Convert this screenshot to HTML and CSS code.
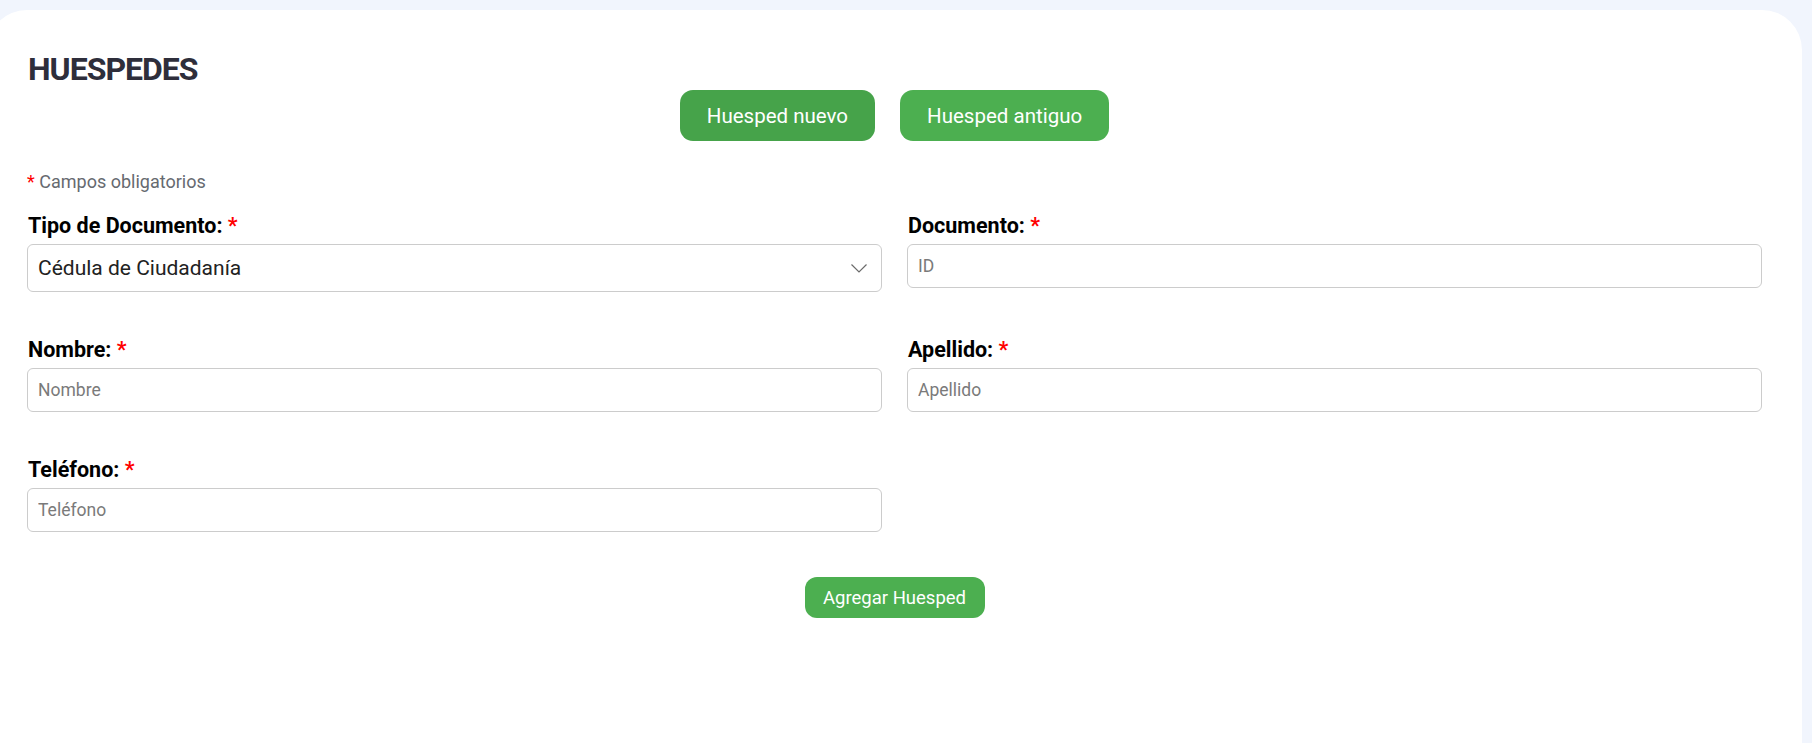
FILE: index.html
```html
<!DOCTYPE html>
<html lang="es">
<head>
<meta charset="utf-8">
<title>Huespedes</title>
<link rel="stylesheet" href="styles.css">
</head>
<body>
<main class="card">
  <h1 class="title">HUESPEDES</h1>
  <div class="mode-buttons">
    <button class="btn btn-mode btn-active" type="button">Huesped nuevo</button>
    <button class="btn btn-mode" type="button">Huesped antiguo</button>
  </div>
  <p class="required-note"><span class="req">*</span> Campos obligatorios</p>
  <form class="form-grid">
    <div class="field">
      <label class="label">Tipo de Documento: <span class="req">*</span></label>
      <div class="select">
        <span class="select-value">Cédula de Ciudadanía</span>
        <svg class="chevron" width="16" height="9" viewBox="0 0 16 9"><path d="M0.5 0.5 L8 8 L15.5 0.5" fill="none" stroke="#6b6b6b" stroke-width="1.2"/></svg>
      </div>
    </div>
    <div class="field">
      <label class="label">Documento: <span class="req">*</span></label>
      <input class="input" type="text" placeholder="ID">
    </div>
    <div class="field">
      <label class="label">Nombre: <span class="req">*</span></label>
      <input class="input" type="text" placeholder="Nombre">
    </div>
    <div class="field">
      <label class="label">Apellido: <span class="req">*</span></label>
      <input class="input" type="text" placeholder="Apellido">
    </div>
    <div class="field">
      <label class="label">Teléfono: <span class="req">*</span></label>
      <input class="input" type="text" placeholder="Teléfono">
    </div>
  </form>
  <div class="submit-row">
    <button class="btn btn-submit" type="button">Agregar Huesped</button>
  </div>
</main>
</body>
</html>
```

FILE: styles.css
```css
* { box-sizing: border-box; }

html, body {
  margin: 0;
  padding: 0;
  height: 100%;
  overflow: hidden;
}

body {
  background: #f1f5fd;
  font-family: Roboto, "Liberation Sans", sans-serif;
  padding-top: 10px;
}

.card {
  background: #ffffff;
  margin-left: -13px;
  width: 1815px;
  min-height: 800px;
  border-radius: 40px 40px 0 0;
  padding: 40px 40px 40px 40px;
}

.title {
  margin: 0;
  font-size: 32px;
  line-height: 38px;
  font-weight: 700;
  color: #2e2e3b;
  letter-spacing: -1px;
  padding-left: 1px;
}

.mode-buttons {
  display: flex;
  justify-content: center;
  gap: 25px;
  margin-top: 2px;
}

.btn {
  border: none;
  color: #ffffff;
  font-family: Roboto, "Liberation Sans", sans-serif;
  background: #4caf50;
  cursor: pointer;
  padding: 0;
}

.btn-mode {
  height: 51px;
  border-radius: 13px;
  font-size: 20.5px;
  padding: 0 27px;
}

.btn-active {
  background: #46a34a;
}

.required-note {
  margin: 29px 0 0 0;
  font-size: 18px;
  line-height: 24px;
  color: #666a70;
}

.req {
  color: #ff0000;
}

.form-grid {
  display: grid;
  grid-template-columns: 1fr 1fr;
  column-gap: 25px;
  row-gap: 46px;
  margin-top: 20px;
}

.field {
  display: flex;
  flex-direction: column;
}

.label {
  font-size: 21.5px;
  line-height: 24px;
  font-weight: 700;
  color: #000000;
  margin-bottom: 6px;
  padding-left: 1px;
}

.select {
  height: 48px;
  border: 1px solid #cccccc;
  border-radius: 6px;
  display: flex;
  align-items: center;
  justify-content: space-between;
  padding: 0 14px 0 10px;
}

.select-value {
  font-size: 21px;
  color: #222222;
}

.input {
  height: 44px;
  border: 1px solid #cccccc;
  border-radius: 6px;
  padding: 0 10px;
  font-family: Roboto, "Liberation Sans", sans-serif;
  font-size: 17.5px;
  outline: none;
}

.input::placeholder {
  color: #7a7a7a;
}

.submit-row {
  display: flex;
  justify-content: center;
  margin-top: 45px;
}

.btn-submit {
  width: 180px;
  height: 41px;
  border-radius: 12px;
  font-size: 18.5px;
}
```
